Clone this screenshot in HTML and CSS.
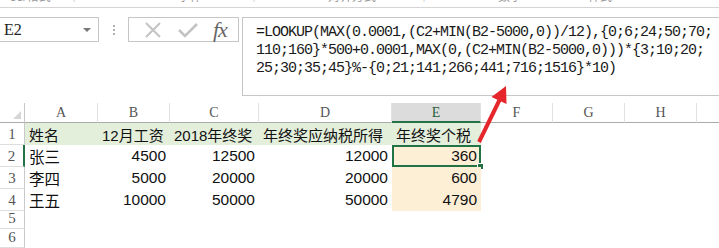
FILE: index.html
```html
<!DOCTYPE html>
<html lang="zh-CN">

<head>
    <meta charset="UTF-8" />
    <title>年终奖个税</title>
    <link rel="stylesheet" href="styles.css">
</head>

<body>
    <!-- 功能区底部（被截掉） -->
    <div class="ribbon">
        <div class="ribbon-row">
            <span class="rb" style="width:58px">55/格式</span>
            <span class="rb" style="width:110px">┆</span>
            <span class="rb" style="width:70px">字体</span>
            <span class="rb" style="width:80px">┆</span>
            <span class="rb" style="width:90px">对齐方式</span>
            <span class="rb" style="width:80px">┆</span>
            <span class="rb" style="width:90px">数字</span>
            <span class="rb" style="width:100px">样式</span>
        </div>
    </div>

    <!-- 编辑栏 -->
    <div class="fbar">
        <div class="namebox">
            <span>E2</span>
            <i class="caret"></i>
        </div>
        <div class="grip"><i></i><i></i><i></i></div>
        <div class="btns">
            <svg width="18" height="18" viewBox="0 0 18 18">
                <path d="M2 2 L16 16 M16 2 L2 16" stroke="#c3c3c3" stroke-width="2" fill="none" />
            </svg>
            <svg width="22" height="18" viewBox="0 0 22 18">
                <path d="M2 9 L8 15 L20 3" stroke="#c3c3c3" stroke-width="2.6" fill="none" />
            </svg>
            <span class="fx">fx</span>
        </div>
        <div class="formula">
            <p>=LOOKUP(MAX(0.0001,(C2+MIN(B2-5000,0))/12),{0;6;24;50;70;</p>
            <p>110;160}*500+0.0001,MAX(0,(C2+MIN(B2-5000,0)))*{3;10;20;</p>
            <p>25;30;35;45}%-{0;21;141;266;441;716;1516}*10)</p>
        </div>
    </div>

    <!-- 表格 -->
    <div class="sheet">
        <div class="corner"><i></i></div>
        <div class="colhead">A</div>
        <div class="colhead">B</div>
        <div class="colhead">C</div>
        <div class="colhead">D</div>
        <div class="colhead active">E</div>
        <div class="colhead">F</div>
        <div class="colhead">G</div>
        <div class="colhead">H</div>
        <div class="colhead last"></div>

        <div class="rowhead">1</div>
        <div class="cell head">姓名</div>
        <div class="cell head">12月工资</div>
        <div class="cell head">2018年终奖</div>
        <div class="cell head">年终奖应纳税所得</div>
        <div class="cell head">年终奖个税</div>
        <div class="cell"></div>
        <div class="cell"></div>
        <div class="cell"></div>
        <div class="cell"></div>

        <div class="rowhead sel">2</div>
        <div class="cell">张三</div>
        <div class="cell num">4500</div>
        <div class="cell num">12500</div>
        <div class="cell num">12000</div>
        <div class="cell num tax current">360<i class="handle"></i></div>
        <div class="cell"></div>
        <div class="cell"></div>
        <div class="cell"></div>
        <div class="cell"></div>

        <div class="rowhead">3</div>
        <div class="cell">李四</div>
        <div class="cell num">5000</div>
        <div class="cell num">20000</div>
        <div class="cell num">20000</div>
        <div class="cell num tax">600</div>
        <div class="cell"></div>
        <div class="cell"></div>
        <div class="cell"></div>
        <div class="cell"></div>

        <div class="rowhead">4</div>
        <div class="cell">王五</div>
        <div class="cell num">10000</div>
        <div class="cell num">50000</div>
        <div class="cell num">50000</div>
        <div class="cell num tax">4790</div>
        <div class="cell"></div>
        <div class="cell"></div>
        <div class="cell"></div>
        <div class="cell"></div>

        <div class="rowhead">5</div>
        <div class="cell"></div>
        <div class="cell"></div>
        <div class="cell"></div>
        <div class="cell"></div>
        <div class="cell"></div>
        <div class="cell"></div>
        <div class="cell"></div>
        <div class="cell"></div>
        <div class="cell"></div>

        <div class="rowhead">6</div>
        <div class="cell"></div>
        <div class="cell"></div>
        <div class="cell"></div>
        <div class="cell"></div>
        <div class="cell"></div>
        <div class="cell"></div>
        <div class="cell"></div>
        <div class="cell"></div>
        <div class="cell"></div>
    </div>

    <!-- 红色箭头 -->
    <svg class="arrow" width="719" height="248" viewBox="0 0 719 248">
        <line x1="479" y1="142" x2="500" y2="99" stroke="#e5262b" stroke-width="4" />
        <polygon points="506,86 491.5,97 506.5,104" fill="#e5262b" />
    </svg>
</body>

</html>
```

FILE: styles.css
```css
body {
    margin: 0;
    padding: 0;
    background-color: #fff;
    font-family: "Liberation Sans", "Noto Sans CJK SC", sans-serif;
    position: relative;
    width: 719px;
    height: 248px;
    overflow: hidden;
}

/* 功能区 */
.ribbon {
    height: 7px;
    border-bottom: 1px solid #d4d4d4;
    overflow: hidden;
}

.ribbon-row {
    display: flex;
    margin-top: -10px;
    padding-left: 10px;
    font-size: 12px;
    line-height: 14px;
    color: #9a9a9a;
}

.rb {
    flex: none;
}

/* 编辑栏 */
.fbar {
    display: flex;
    align-items: flex-start;
    padding-top: 9px;
    height: 79px;
}

.namebox {
    width: 99px;
    height: 25px;
    box-sizing: border-box;
    border: 1px solid #c6c6c6;
    border-left: none;
    display: flex;
    align-items: center;
    justify-content: space-between;
    padding: 0 7px 0 4px;
    font-family: "Liberation Serif", serif;
    font-size: 16px;
    color: #222;
}

.caret {
    width: 0;
    height: 0;
    border-left: 4px solid transparent;
    border-right: 4px solid transparent;
    border-top: 4px solid #777;
}

.grip {
    width: 29px;
    height: 25px;
    display: flex;
    flex-direction: column;
    align-items: center;
    justify-content: center;
    gap: 2px;
}

.grip i {
    display: block;
    width: 2px;
    height: 2px;
    background-color: #b0b0b0;
}

.btns {
    width: 111px;
    height: 25px;
    box-sizing: border-box;
    border: 1px solid #c6c6c6;
    display: flex;
    align-items: center;
    justify-content: space-around;
    padding: 0 4px 0 8px;
}

.fx {
    font-family: "Liberation Serif", serif;
    font-style: italic;
    font-size: 22px;
    line-height: 22px;
    color: #666;
    letter-spacing: -1px;
}

.formula {
    flex: 1;
    margin-left: 3px;
    height: 79px;
    box-sizing: border-box;
    border: 1px solid #c6c6c6;
    border-right: none;
    padding: 6px 0 0 13px;
}

.formula p {
    margin: 0;
    font-family: "Liberation Mono", monospace;
    font-size: 15px;
    letter-spacing: -1px;
    line-height: 18px;
    color: #1a1a1a;
    white-space: nowrap;
}

/* 表格 */
.sheet {
    display: grid;
    grid-template-columns: 25px 73px 72px 89px 133px 89px 72px 72px 72px 22px;
    grid-template-rows: 20px 22px 22px 22px 22px 18px 19px;
    margin-top: 7px;
}

.corner {
    border-right: 1px solid #c9c9c9;
    border-bottom: 1px solid #ababab;
    position: relative;
}

.corner i {
    position: absolute;
    right: 3px;
    bottom: 3px;
    width: 0;
    height: 0;
    border-left: 8px solid transparent;
    border-bottom: 8px solid #d6d6d6;
}

.colhead {
    border-bottom: 1px solid #ababab;
    border-right: 1px solid #e2e2e2;
    text-align: center;
    font-family: "Liberation Serif", serif;
    font-size: 14px;
    line-height: 20px;
    color: #555;
}

.colhead.active {
    background-color: #dcdcdc;
    border-bottom: 2px solid #217346;
    line-height: 19px;
    color: #2b5e3d;
}

.colhead.last {
    border-right: none;
}

.rowhead {
    border-right: 1px solid #c9c9c9;
    border-bottom: 1px solid #dedede;
    text-align: center;
    font-family: "Liberation Serif", serif;
    font-size: 15px;
    color: #555;
    display: flex;
    align-items: flex-end;
    justify-content: center;
    padding-bottom: 1px;
}

.rowhead.sel {
    border-right: 2px solid #217346;
}

.cell {
    font-size: 15.5px;
    color: #111;
    display: flex;
    align-items: center;
    padding: 0 4px;
    white-space: nowrap;
    position: relative;
}

.cell.num {
    justify-content: flex-end;
}

.cell.head {
    background-color: #e3eedb;
    font-size: 15px;
}

.cell.tax {
    background-color: #fdefd6;
}

.cell.current {
    outline: 2px solid #217346;
    outline-offset: -2px;
}

.handle {
    position: absolute;
    right: -3px;
    bottom: -3px;
    width: 5px;
    height: 5px;
    background-color: #217346;
    border: 1px solid #fff;
}

.arrow {
    position: absolute;
    top: 0;
    left: 0;
    pointer-events: none;
}
```
